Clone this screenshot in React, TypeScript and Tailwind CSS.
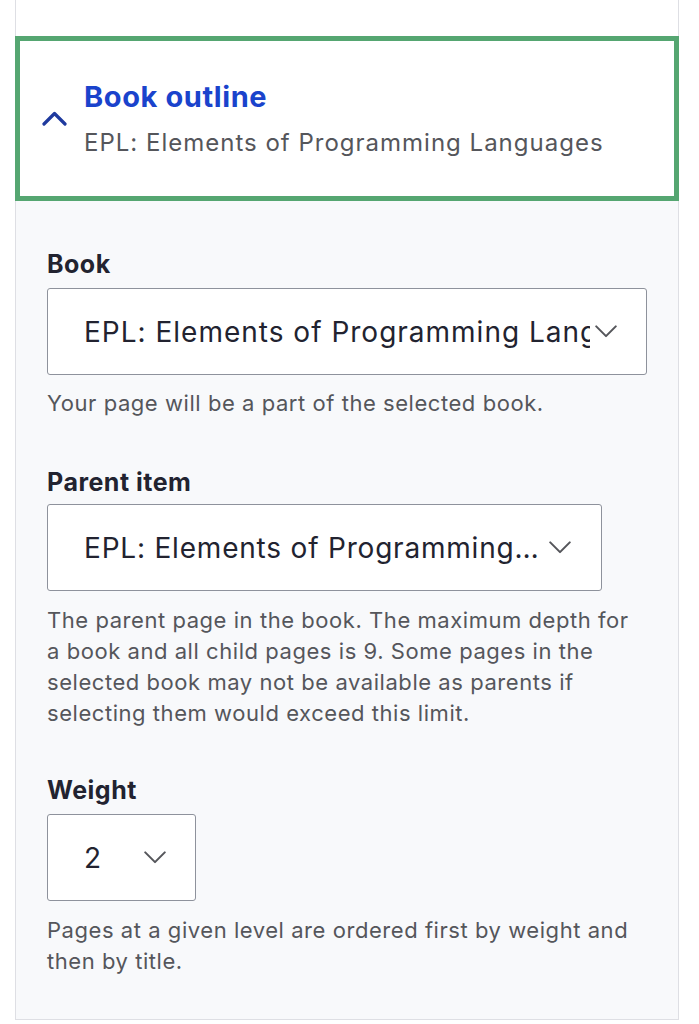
import React from "react";

function ChevronDown({ className }: { className?: string }) {
  return (
    <svg className={className} viewBox="0 0 24 14" fill="none">
      <polyline points="1.5,1.5 12,12 22.5,1.5" stroke="#55565b" strokeWidth="2.2" strokeLinecap="round" strokeLinejoin="round" />
    </svg>
  );
}

function ChevronUp() {
  return (
    <svg className="w-[25px] h-[15px] shrink-0" viewBox="0 0 25 15" fill="none">
      <polyline points="2,13 12.5,2.5 23,13" stroke="#1f3a9e" strokeWidth="3.2" strokeLinecap="round" strokeLinejoin="round" />
    </svg>
  );
}

export default function App() {
  return (
    <div className="w-[699px] h-[1024px] bg-white overflow-hidden" style={{ fontFamily: "Inter, 'Noto Sans', sans-serif" }}>
      <div className="ml-[15px] w-[664px] flex flex-col">
        <div className="h-[36px] border-x border-[#dedfe4] bg-white" />
        <div className="h-[165px] border-[5px] border-[#55a671] bg-white flex items-center pl-[22px]">
          <ChevronUp />
          <div className="ml-[17px] flex flex-col">
            <div className="text-[29px] leading-[36px] font-bold text-[#1a43cc] tracking-[0.6px]">Book outline</div>
            <div className="mt-[13px] text-[24px] leading-[30px] text-[#55565b] tracking-[1px]">EPL: Elements of Programming Languages</div>
          </div>
        </div>
        <div className="h-[819px] border-x border-b border-[#dedfe4] bg-[#f8f9fb] pl-[31px] pt-[48px]">
          <div className="text-[25px] leading-[30px] font-bold text-[#222330] tracking-[0.5px]">Book</div>
          <div className="mt-[9px] w-[600px] h-[87px] bg-white border border-[#8e929c] rounded-[3px] flex items-center pl-[36px] pr-[28px]">
            <div className="flex-1 overflow-hidden whitespace-nowrap text-[28px] text-[#222330] tracking-[1px]">EPL: Elements of Programming Languages</div>
            <ChevronDown className="w-[24px] h-[13px] shrink-0 ml-[4px]" />
          </div>
          <div className="mt-[13px] text-[22px] leading-[31px] text-[#55565b] tracking-[0.55px]">Your page will be a part of the selected book.</div>

          <div className="mt-[48px] text-[25px] leading-[30px] font-bold text-[#222330] tracking-[0.5px]">Parent item</div>
          <div className="mt-[7px] w-[555px] h-[87px] bg-white border border-[#8e929c] rounded-[3px] flex items-center justify-between pl-[36px] pr-[29px]">
            <div className="whitespace-nowrap text-[28px] text-[#222330] tracking-[0.8px]">EPL: Elements of Programming…</div>
            <ChevronDown className="w-[24px] h-[13px] shrink-0" />
          </div>
          <div className="mt-[14px] w-[600px] text-[22px] leading-[31px] text-[#55565b] tracking-[0.55px]">
            The parent page in the book. The maximum depth for a book and all child pages is 9. Some pages in the selected book may not be available as parents if selecting them would exceed this limit.
          </div>

          <div className="mt-[46px] text-[25px] leading-[30px] font-bold text-[#222330] tracking-[0.5px]">Weight</div>
          <div className="mt-[9px] w-[149px] h-[87px] bg-white border border-[#8e929c] rounded-[3px] flex items-center pl-[36px]">
            <div className="w-[59px] text-[28px] text-[#222330]">2</div>
            <ChevronDown className="w-[24px] h-[13px] shrink-0" />
          </div>
          <div className="mt-[14px] w-[600px] text-[22px] leading-[31px] text-[#55565b] tracking-[0.55px]">
            Pages at a given level are ordered first by weight and then by title.
          </div>
        </div>
      </div>
    </div>
  );
}
